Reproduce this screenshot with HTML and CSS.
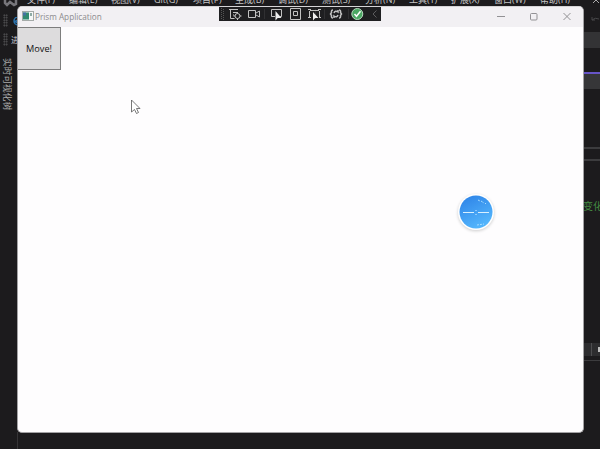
FILE: index.html
```html
<!DOCTYPE html>
<html lang="zh-CN">
<head>
<meta charset="utf-8">
<title>Prism Application</title>
<link rel="stylesheet" href="styles.css">
</head>
<body>
<div class="desktop">
  <nav class="menu">
    <span>文件(F)</span><span>编辑(E)</span><span>视图(V)</span><span>Git(G)</span><span>项目(P)</span><span>生成(B)</span><span>调试(D)</span><span>测试(S)</span><span>分析(N)</span><span>工具(T)</span><span>扩展(X)</span><span>窗口(W)</span><span>帮助(H)</span>
  </nav>
  <svg class="logo" width="18" height="8" viewBox="0 0 18 8"><path d="M5 0v3l2 2 3-3 4 3 2-1V0" fill="none" stroke="#77767b" stroke-width="2.5"/></svg>
  <svg class="search" width="7" height="9" viewBox="0 0 7 9"><path d="M7 0A4 4 0 0 0 7 8M7 3L4 4.500 7 6" fill="none" stroke="#2b72ad" stroke-width="1.500"/></svg>
  <div class="grip grip-top"></div>
  <div class="grip grip-low"></div>
  <span class="process">进程</span>
  <span class="side-tab">实时可视化树</span>
  <div class="dock-edge"></div>
  <aside class="editor">
    <div class="tools"><svg width="10" height="8" viewBox="0 0 10 8"><path d="M2 1v3h3M2 4q3-3 7-1" fill="none" stroke="#464648"/></svg></div>
    <div class="band"></div>
    <div class="tab"></div>
    <div class="rule"></div>
    <div class="rule second"></div>
    <div class="code">变化</div>
    <div class="status"><i></i><b></b></div>
    <div class="rule last"></div>
  </aside>
  <svg class="pin" width="8" height="5" viewBox="0 0 8 5"><path d="m2 3 3-3 3 3" fill="none" stroke="#aaa"/></svg>
</div>
<main class="window">
  <header class="titlebar">
    <svg class="app-icon" width="12" height="10" viewBox="0 0 12 10"><path fill="#a4aaa8" d="M0 0h12v10H0z"/><path fill="#f5f8f8" d="M1 1h10v8H1z"/><path fill="#318a70" d="M1 1.500h6v7H1z"/><path fill="#4672a3" d="M1 1.500h3v3H1z"/><path fill="#8eaaa5" d="M8 2h2v3H8z"/></svg>
    <span class="title">Prism Application</span>
    <svg class="controls" width="84" height="12" viewBox="0 0 84 12" fill="none" stroke="#929194"><path d="M6 6.500h8M72.500 3l7 7m0-7-7 7"/><rect x="39.500" y="3.500" width="6.500" height="6.500" rx="1"/></svg>
  </header>
  <button class="move">Move!</button>
</main>
<div class="debugbar">
  <svg width="162" height="14" viewBox="0 0 162 14" fill="none" stroke="#c2c2c2">
    <path d="M2.500 1v12M4.500 2v12" stroke="#555" stroke-dasharray="1 1"/>
    <path d="M10 2.500h9M11.500 2v9.500h4M14 5.500h4M14 8h1"/><circle cx="18.500" cy="9" r="2.500"/><path d="M18.500 5v1.500M18.500 11.500V13M14.500 9H16M21 9h1.500"/>
    <path d="M29.500 3.500h7v7h-7zM37 6l3.500-2v6L37 8"/>
    <path d="M45.500 2v10M96.500 2v10M105.500 2v10M129.500 2v10" stroke="#303032"/>
    <path d="M56 9.500h-3.500v-7h10v7h-2"/><path d="M56.500 4v9.500l2.200-2.500h3.800z" fill="#eee" stroke="none"/>
    <path d="M71.500 1.500h10v11h-10zM74.500 4.500h4v4h-4z"/>
    <path d="M91 3.500h9M90.500 4v6M100.500 4v6M89 2.500h3M99 2.500h3M89 10.500h3M100 10.500h2"/><path d="M94 5v8.500l2.200-2.500h3.300z" fill="#eee" stroke="none"/>
    <path d="M114 3q-2 0-1.500 2.500L111.500 7l1 1.500Q112 11 114 11M120 3q2 0 1.500 2.500L122.500 7l-1 1.500Q122 11 120 11M115 6q1-3 4-1V3M119 8q-1 3-4 1v2" stroke-width="1.500"/>
    <circle cx="138.300" cy="7" r="5.500" fill="#4aa762" stroke="#b5d8bc"/><path d="m135.500 7 2 2.300 4-5" stroke="#fff" stroke-width="1.500"/>
    <path d="m157.500 3.500-3.500 3.500 3.500 3.500" stroke="#5c5c5e"/>
  </svg>
</div>
<svg class="ball" width="42" height="42" viewBox="0 0 42 42">
  <defs><linearGradient id="blue" x2="0.5" y2="1"><stop stop-color="#2b80e6"/><stop offset="1" stop-color="#53b5fc"/></linearGradient></defs>
  <circle cx="21" cy="21" r="18" fill="#fff"/><circle cx="21" cy="21" r="16.500" fill="url(#blue)"/>
  <path d="M8 21.500h11M23 21.500h11" stroke="#d8f0ff"/><path d="M20.500 19.500h1M20.500 23.500h1" stroke="#d8f0ff"/>
  <path d="m23 9 2 1m1 0 3 2m1 0 1 1M22 34l7-1" stroke="#a6dcff" stroke-dasharray="2 1"/>
</svg>
<svg class="cursor" width="11" height="16" viewBox="0 0 11 16"><path d="M1.500 1v12l3-2.500 2 4 2-1-2-4h3.500z" fill="#fff" stroke="#555" stroke-width=".8"/></svg>
</body>
</html>
```

FILE: styles.css
```css
* { box-sizing: border-box; }
body {
  position: relative;
  width: 600px;
  height: 449px;
  margin: 0;
  overflow: hidden;
  background: #1c1b1d;
  font-family: "Open Sans", "Noto Sans CJK SC", sans-serif;
}
.desktop { height: 449px; }
.menu {
  display: grid;
  grid-template-columns: 42px 42px 43px 39px 42px 43px 44px 43px 44px 42px 43px 46px 40px;
  height: 6px;
  padding-left: 27px;
  overflow: hidden;
  color: #c5c5c5;
  font-size: 9px;
  line-height: 12px;
  white-space: nowrap;
}
.menu span { margin-top: -6px; }
.logo, .search, .grip, .process, .side-tab, .pin, .dock-edge { position: absolute; }
.logo { left: 0; top: 0; }
.search { left: 11px; top: 17px; }
.pin { left: 591px; top: 0; }
.dock-edge { left: 17px; top: 432px; width: 1px; height: 17px; background: #353436; }
.grip {
  left: 3px;
  width: 5px;
  height: 13px;
  background: radial-gradient(circle, #59595b 0.7px, transparent 1px) 0 0 / 2.5px 2.5px;
}
.grip-top { top: 14px; }
.grip-low { top: 33px; }
.process { left: 11px; top: 34px; color: #ccc; font-size: 8px; line-height: 12px; white-space: nowrap; }
.side-tab { left: 1px; top: 58px; color: #aaa; font-size: 8.7px; line-height: 12px; writing-mode: vertical-rl; text-orientation: sideways; }
.editor {
  position: absolute;
  left: 583px;
  top: 0;
  display: flex;
  flex-direction: column;
  width: 17px;
  height: 449px;
}
.tools { height: 32px; padding: 16px 0 0 7px; overflow: hidden; }
.tools svg { display: block; }
.band { height: 16px; background: #333335; }
.tab { height: 17px; margin-top: 24px; border-top: 2px solid #6755c7; background: #363638; }
.rule { height: 2px; margin-top: 58px; background: #3c3c3e; }
.rule.second { margin-top: 10px; }
.code { margin-top: 38px; color: #438941; font-size: 10px; line-height: 14px; white-space: nowrap; }
.status { display: flex; justify-content: space-between; height: 13px; margin-top: 130px; background: #2d2d2f; }
.status i { width: 1px; margin-left: 8px; background: #4d4d4f; }
.status b { width: 2px; height: 5px; margin-top: 4px; background: #bbb; }
.rule.last { height: 1px; margin-top: 4px; }
.window {
  position: absolute;
  left: 17px;
  top: 6px;
  width: 567px;
  height: 427px;
  overflow: hidden;
  border: 1px solid #a3a2a4;
  border-top-color: #d5d4d6;
  border-radius: 5px;
  background: #fefdfe;
}
.titlebar { display: flex; align-items: center; height: 20px; padding: 0 8px 2px 4px; background: #f2f0f3; }
.title { margin-left: 1px; color: #8c8b8e; font-size: 8.2px; }
.controls { margin-left: auto; }
.move {
  display: block;
  width: 44px;
  height: 43px;
  margin-left: -1px;
  padding: 0;
  border: 1px solid #7d7d7d;
  background: #dddcdd;
  color: #111;
  font: 9.2px "Open Sans", sans-serif;
}
.debugbar { position: absolute; left: 219px; top: 7px; height: 14px; background: #1f1f21; }
.debugbar svg { display: block; }
.ball { position: absolute; left: 455px; top: 191px; filter: drop-shadow(0 1px 1.5px #ccc); }
.cursor { position: absolute; left: 130px; top: 99px; }
```
